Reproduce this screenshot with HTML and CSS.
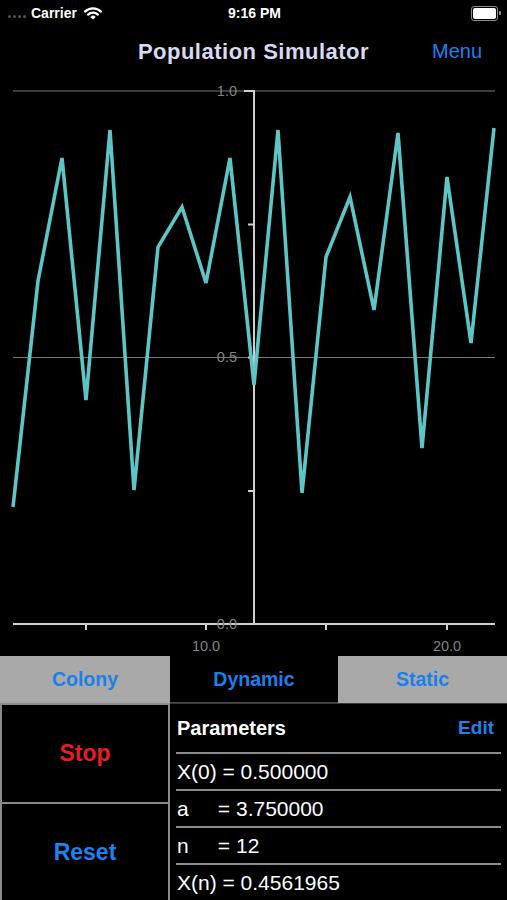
FILE: index.html
```html
<!DOCTYPE html>
<html lang="en">

<head>
    <meta charset="UTF-8">
    <meta name="viewport" content="width=device-width, initial-scale=1.0">
    <title>Population Simulator</title>
    <link rel="stylesheet" href="styles.css">
</head>

<body>
    <div class="status">
        <div class="status-left">
            <span class="signal"><i></i><i></i><i></i><i></i></span>
            <span>Carrier</span>
            <svg class="wifi" width="18" height="13" viewBox="0 0 18 13">
                <path d="M1 4.6 A11.5 11.5 0 0 1 17 4.6" fill="none" stroke="#fff" stroke-width="2.2" stroke-linecap="round"/>
                <path d="M4 7.6 A7.2 7.2 0 0 1 14 7.6" fill="none" stroke="#fff" stroke-width="2.2" stroke-linecap="round"/>
                <path d="M9 12.6 L6.4 9.9 A3.6 3.6 0 0 1 11.6 9.9 Z" fill="#fff"/>
            </svg>
        </div>
        <div class="status-time">9:16 PM</div>
        <div class="status-right">
            <span class="battery"><span class="battery-level"></span></span>
        </div>
    </div>

    <header class="navbar">
        <h1>Population Simulator</h1>
        <a class="menu" href="#">Menu</a>
    </header>

    <!-- chart drawn in page coordinates, y from 78 to 656 -->
    <svg class="chart" width="507" height="578" viewBox="0 78 507 578">
        <line class="grid" x1="13" y1="91" x2="495" y2="91"/>
        <line class="grid" x1="13" y1="357.5" x2="495" y2="357.5"/>
        <line class="axis" x1="254" y1="91" x2="254" y2="625"/>
        <line class="axis" x1="13" y1="624" x2="495" y2="624"/>
        <line class="axis" x1="244" y1="91" x2="255" y2="91"/>
        <line class="axis" x1="248" y1="224.5" x2="254" y2="224.5"/>
        <line class="axis" x1="248" y1="357.5" x2="254" y2="357.5"/>
        <line class="axis" x1="248" y1="491" x2="254" y2="491"/>
        <line class="axis" x1="86" y1="624" x2="86" y2="630"/>
        <line class="axis" x1="206" y1="624" x2="206" y2="630"/>
        <line class="axis" x1="326" y1="624" x2="326" y2="630"/>
        <line class="axis" x1="447" y1="624" x2="447" y2="630"/>
        <text class="label" x="237" y="96" text-anchor="end">1.0</text>
        <text class="label" x="237" y="362" text-anchor="end">0.5</text>
        <text class="label" x="237" y="629" text-anchor="end">0.0</text>
        <text class="label" x="206" y="651" text-anchor="middle">10.0</text>
        <text class="label" x="447" y="651" text-anchor="middle">20.0</text>
        <polyline class="series" points="13,507 38,281 62,158 86,400 110,130 134,490 158,247 182,207 206,283 230,158 254,385 278,130 302,493 326,257 350,197 374,310 398,133 422,448 447,177 471,343 494,128"/>
    </svg>

    <nav class="tabs">
        <a class="tab" href="#">Colony</a>
        <a class="tab active" href="#">Dynamic</a>
        <a class="tab" href="#">Static</a>
    </nav>

    <section class="controls">
        <div class="buttons">
            <button class="btn stop">Stop</button>
            <button class="btn reset">Reset</button>
        </div>
        <div class="params">
            <div class="params-head">
                <span class="params-title">Parameters</span>
                <a class="edit" href="#">Edit</a>
            </div>
            <div class="param">X(0) = 0.500000</div>
            <div class="param">a     = 3.750000</div>
            <div class="param">n     = 12</div>
            <div class="param">X(n) = 0.4561965</div>
        </div>
    </section>
</body>

</html>
```

FILE: styles.css
```css
body {
    margin: 0;
    width: 507px;
    height: 900px;
    overflow: hidden;
    background: #000;
    color: #fff;
    font-family: "Liberation Sans", Arial, sans-serif;
}

a {
    text-decoration: none;
}

.status {
    height: 26px;
    display: grid;
    grid-template-columns: 1fr auto 1fr;
    align-items: center;
    font-size: 14px;
    font-weight: bold;
}

.status-left {
    display: flex;
    align-items: center;
    padding-left: 8px;
    gap: 5px;
}

.signal {
    display: flex;
    gap: 2px;
    margin-top: 6px;
}

.signal i {
    width: 3px;
    height: 3px;
    border-radius: 50%;
    background: #555;
}

.wifi {
    margin-left: 2px;
}

.status-time {
    text-align: center;
    padding-left: 2px;
}

.status-right {
    display: flex;
    justify-content: flex-end;
    padding-right: 9px;
}

.battery {
    position: relative;
    width: 23px;
    height: 11px;
    border: 1px solid #8c8c8c;
    border-radius: 3px;
    padding: 1px;
}

.battery::after {
    content: "";
    position: absolute;
    right: -4px;
    top: 4px;
    width: 2px;
    height: 4px;
    border-radius: 0 1px 1px 0;
    background: #8c8c8c;
}

.battery-level {
    display: block;
    height: 100%;
    background: #fff;
    border-radius: 2px;
}

.navbar {
    height: 52px;
    display: flex;
    align-items: center;
    justify-content: center;
    position: relative;
}

.navbar h1 {
    margin: 0;
    font-size: 22px;
    font-weight: bold;
    letter-spacing: 0.5px;
    color: #d9d9f2;
}

.menu {
    position: absolute;
    right: 25px;
    top: 14px;
    font-size: 20px;
    color: #1d82ee;
}

.chart {
    display: block;
}

.grid {
    stroke: #7a7a7a;
    stroke-width: 1;
}

.axis {
    stroke: #cfcfcf;
    stroke-width: 2;
}

.label {
    fill: #838383;
    font-size: 14.5px;
    font-family: "Liberation Sans", Arial, sans-serif;
}

.series {
    fill: none;
    stroke: #5cc5c6;
    stroke-width: 3.6;
    stroke-linejoin: miter;
}

.tabs {
    height: 47px;
    display: grid;
    grid-template-columns: 170px 168px 169px;
}

.tab {
    display: flex;
    align-items: center;
    justify-content: center;
    background: #a9a9a9;
    color: #1d7fe9;
    font-size: 19.5px;
    font-weight: bold;
}

.tab.active {
    background: #000;
    box-shadow: inset 0 -1px 0 #4a4a4a;
}

.controls {
    height: 197px;
    display: grid;
    grid-template-columns: 170px 1fr;
}

.buttons {
    display: grid;
    grid-template-rows: 97px 1fr;
    gap: 2px;
    padding: 2px 2px 0 2px;
    background: #8a8a8a;
}

.btn {
    border: none;
    background: #000;
    font-family: inherit;
    font-size: 23px;
    font-weight: bold;
    padding: 0;
}

.stop {
    color: #ec1b22;
}

.reset {
    color: #1d82ee;
}

.params {
    border-top: 1px solid #3a3a3a;
}

.params-head {
    height: 48px;
    display: flex;
    align-items: center;
    justify-content: space-between;
    padding: 0 13px 0 7px;
}

.params-title {
    font-size: 20px;
    font-weight: bold;
}

.edit {
    font-size: 19px;
    font-weight: bold;
    color: #1d82ee;
}

.param {
    height: 35px;
    margin: 0 6px;
    padding-left: 1px;
    border-top: 2px solid #8c8c8c;
    display: flex;
    align-items: center;
    font-size: 21px;
    white-space: pre;
}
```
